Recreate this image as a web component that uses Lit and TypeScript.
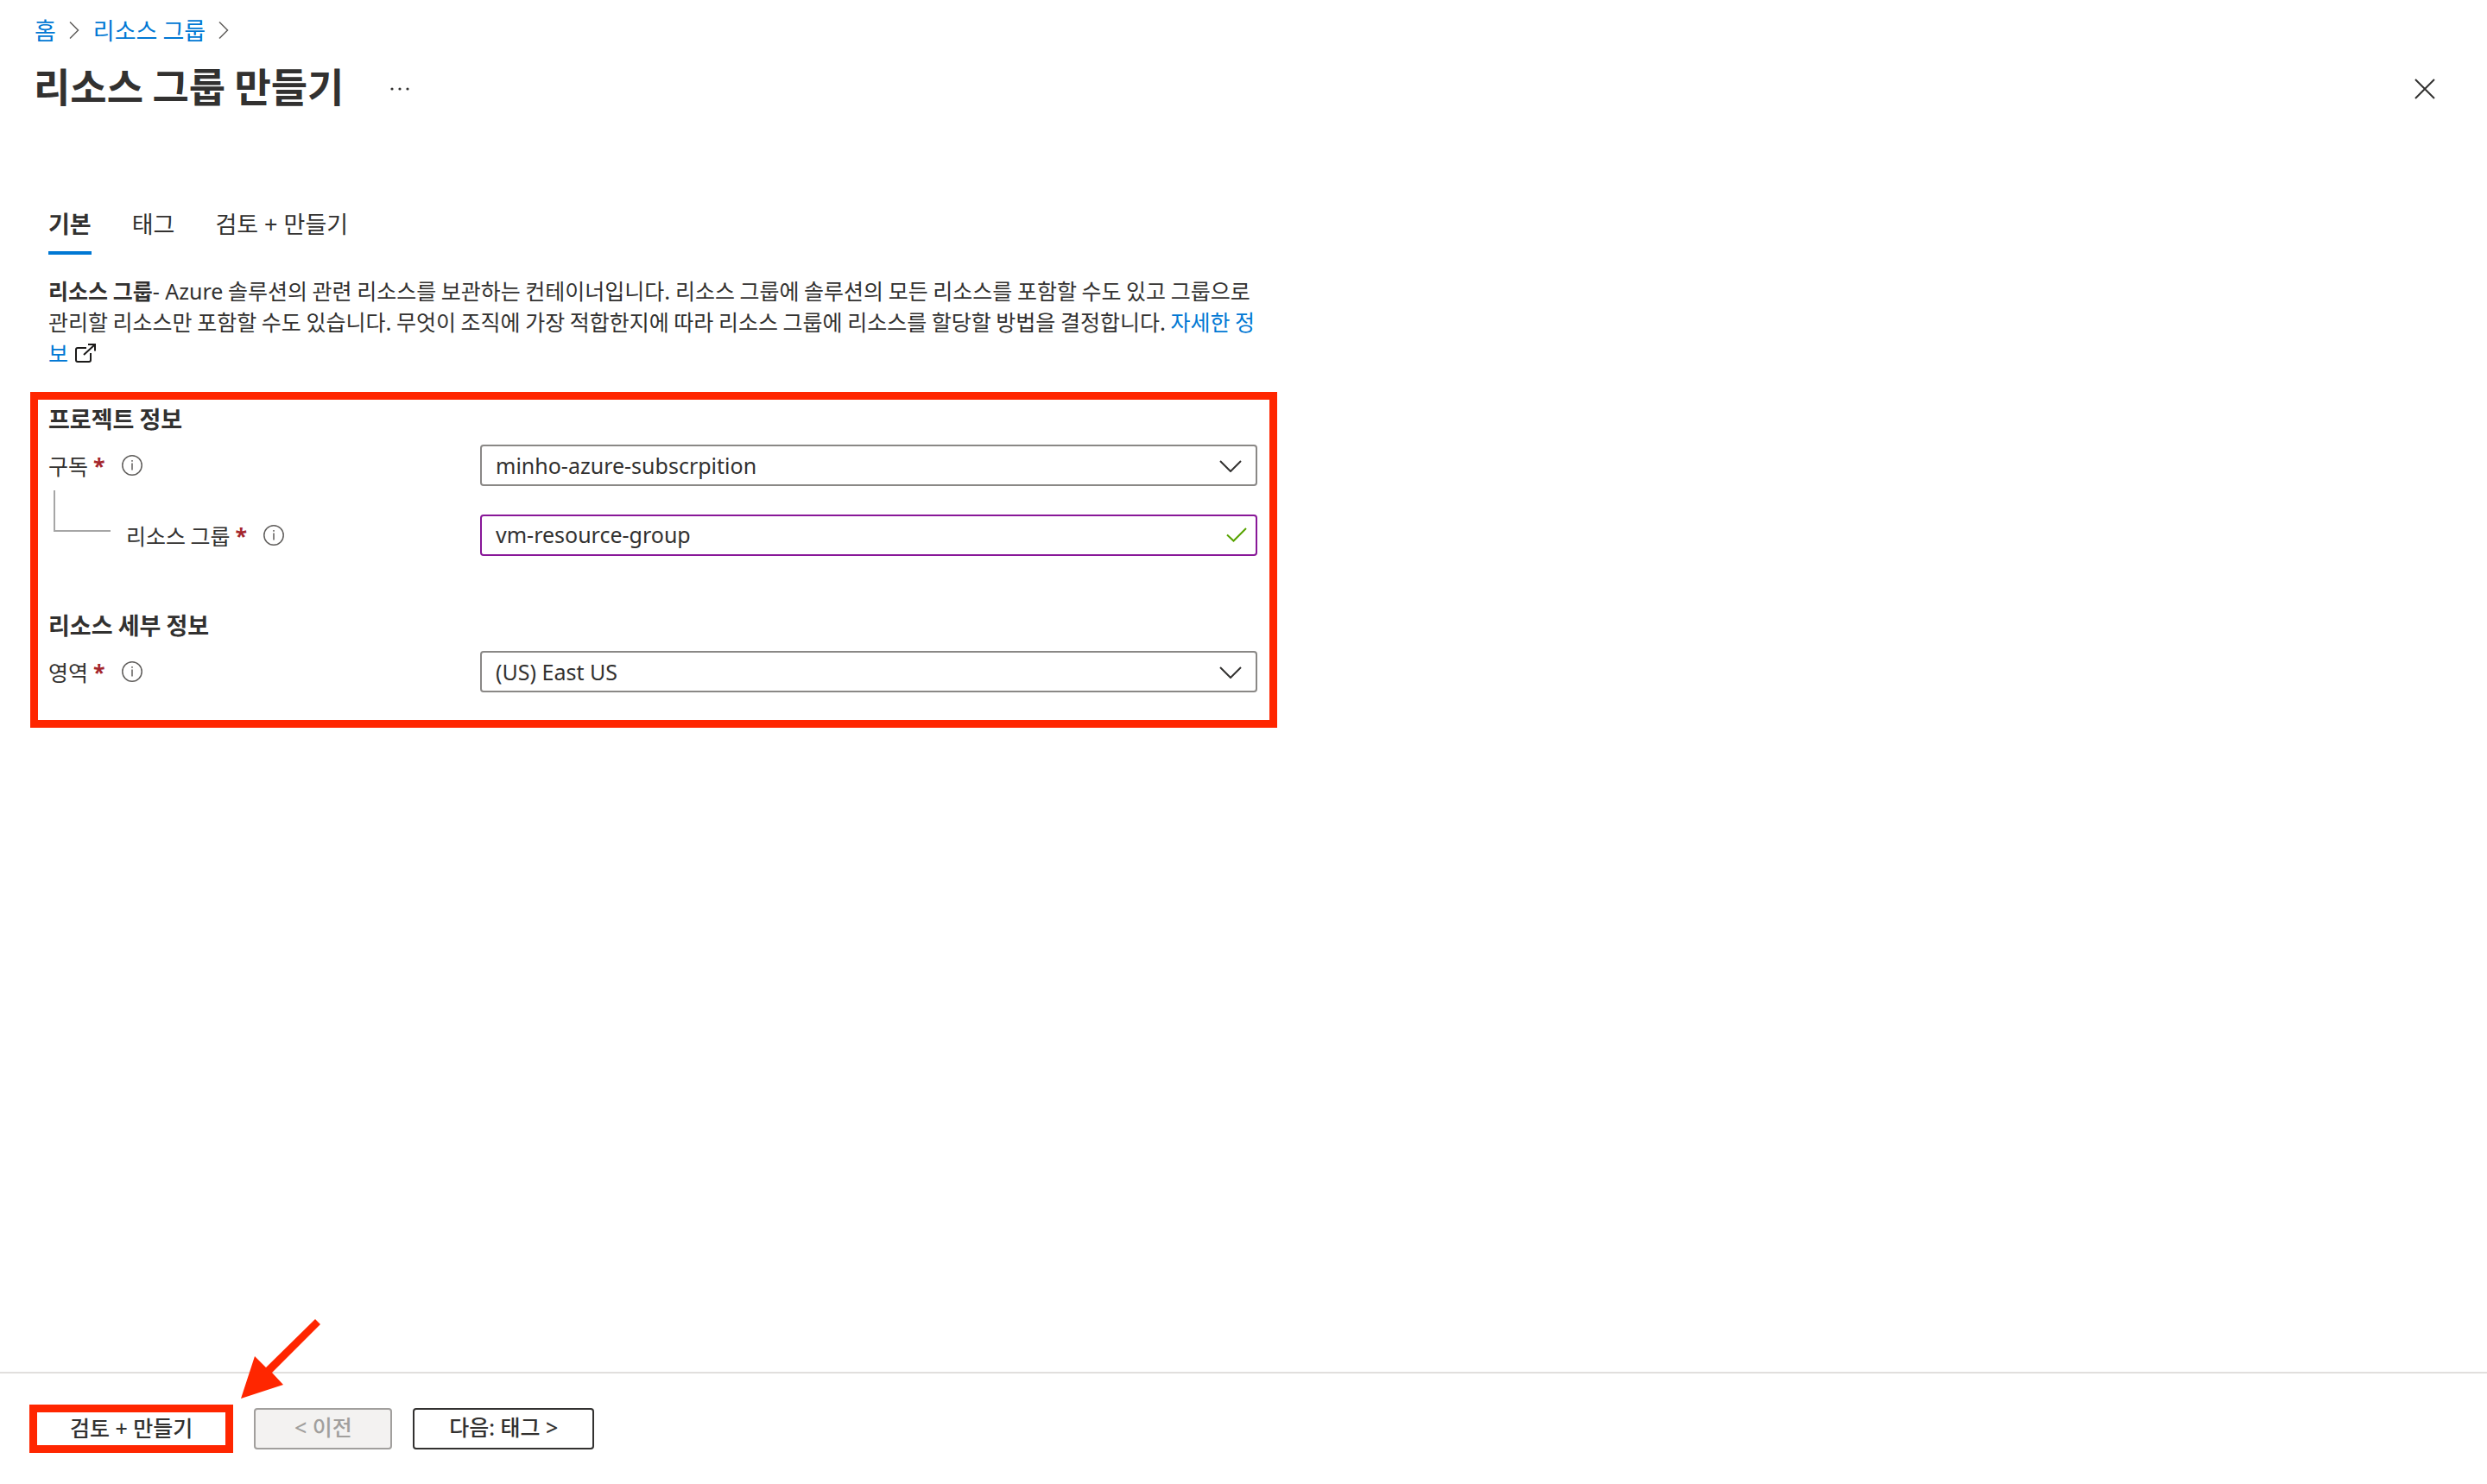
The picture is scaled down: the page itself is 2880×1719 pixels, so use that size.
import { LitElement, html, css, svg } from "lit";
import { customElement, state } from "lit/decorators.js";

const crumbChevron = html`<svg class="crumb-chevron" viewBox="0 0 12 20" aria-hidden="true">
  <path d="M1 0.5 L10.5 10 L1 19.5" />
</svg>`;

const infoIcon = html`<svg class="info" viewBox="0 0 24 24" role="img" aria-label="info">
  <circle cx="12" cy="12" r="11.2" />
  <path d="M12 9.5 V17.5 M12 6 V7.8" />
</svg>`;

const selectChevron = html`<svg class="select-chevron" viewBox="0 0 26 14" aria-hidden="true">
  <path d="M1 1 L13 13 L25 1" />
</svg>`;

const arrowShape = svg`<polygon points="86,0 92,6 36,62 49,76 0,92 16,43 29,56" />`;

@customElement("app-root")
export class AppRoot extends LitElement {
  static styles = css`
    :host {
      display: block;
      color: #323130;
      background: #fff;
      font-family: "Noto Sans CJK KR", sans-serif;
      font-size: 25px;
      line-height: 36px;
    }
    * {
      box-sizing: border-box;
    }
    button,
    input,
    select {
      font: inherit;
      color: inherit;
      margin: 0;
    }
    svg {
      display: block;
      flex: none;
      fill: none;
      stroke: #323130;
    }
    a {
      color: #0078d4;
      text-decoration: none;
    }
    .latin,
    .star,
    .field,
    .tab,
    .action {
      font-family: "Noto Sans", "Noto Sans CJK KR", sans-serif;
    }
    .latin {
      line-height: 24px;
    }
    .page {
      display: flex;
      flex-direction: column;
      min-height: 100vh;
    }
    .crumbs {
      display: flex;
      align-items: center;
      gap: 15px;
      padding: 17px 40px 0;
      font-size: 27px;
    }
    .crumb-chevron {
      width: 12px;
      height: 20px;
      margin-right: 1px;
      stroke: #605e5c;
      stroke-width: 1.5;
    }
    .title-bar {
      display: flex;
      align-items: center;
      padding: 15px 56px 0 39px;
    }
    h1 {
      margin: 0;
      padding-bottom: 8px;
      font-size: 46px;
      line-height: 60px;
      font-weight: 700;
    }
    .icon-button {
      display: flex;
      align-items: center;
      justify-content: center;
      padding: 6px 4px 4px;
      border: 0;
      background: none;
    }
    .more {
      margin-left: 49px;
    }
    .more svg {
      width: 24px;
      height: 24px;
      fill: #323130;
      stroke: none;
    }
    .close {
      margin-left: auto;
    }
    .close svg {
      width: 24px;
      height: 24px;
      stroke-width: 2;
    }
    .tabs {
      display: flex;
      gap: 47px;
      padding: 0 56px;
      margin-top: 104px;
      font-size: 27px;
    }
    .tab {
      height: 55px;
      padding: 2px 0 13px;
      border: 0;
      border-bottom: 4px solid transparent;
      background: none;
    }
    .tab.selected {
      font-weight: 700;
      border-bottom-color: #0078d4;
    }
    .intro {
      max-width: 1464px;
      margin: 23px 0 0;
      padding: 0 0 0 56px;
    }
    .external {
      display: inline-block;
      width: 24px;
      height: 22px;
      margin-left: 2px;
      vertical-align: -1px;
      stroke: #1b1a19;
      stroke-width: 2;
    }
    .panel {
      max-width: 1444px;
      margin: 28px 35px 0;
      padding: 5px 14px 32px 12px;
      border: 9px solid #ff2600;
    }
    h2 {
      margin: 0 0 13px;
      font-size: 27px;
      line-height: 34px;
      font-weight: 700;
    }
    .row {
      display: flex;
      align-items: center;
    }
    .row + .row {
      margin-top: 33px;
    }
    .row + h2 {
      margin-top: 63px;
    }
    .name {
      display: flex;
      align-items: center;
      flex: 0 0 500px;
    }
    .star {
      margin-left: 6px;
      color: #a4262c;
      font-weight: 700;
    }
    .info {
      width: 24px;
      height: 24px;
      margin-left: 19px;
      stroke: #605e5c;
      stroke-width: 1.5;
    }
    .branch {
      align-self: flex-start;
      width: 66px;
      height: 48px;
      margin: -34px 18px 0 6px;
      border: solid #a6a6a6;
      border-width: 0 0 2px 2px;
    }
    .control {
      position: relative;
      flex: 1;
      min-width: 0;
    }
    .field {
      display: block;
      width: 100%;
      height: 48px;
      padding: 0 60px 0 16px;
      border: 2px solid #8a8886;
      border-radius: 4px;
      background: #fff;
      appearance: none;
      outline: none;
    }
    .field.edited {
      padding-bottom: 2px;
      border-color: #881798;
    }
    .select-chevron,
    .check {
      position: absolute;
      pointer-events: none;
      stroke-width: 2;
    }
    .select-chevron {
      top: 18px;
      right: 18px;
      width: 26px;
      height: 14px;
    }
    .check {
      top: 15px;
      right: 12px;
      width: 24px;
      height: 17px;
      stroke: #57a300;
    }
    .footer {
      position: relative;
      display: flex;
      align-items: center;
      gap: 24px;
      margin-top: auto;
      padding: 36px 34px;
      border-top: 2px solid #e1dfdd;
    }
    .action {
      min-width: 160px;
      height: 48px;
      padding: 0 40px 4px;
      border: 2px solid #323130;
      border-radius: 4px;
      background: #fff;
      line-height: 36px;
      font-weight: 500;
    }
    .action:disabled {
      color: #a19f9d;
      border-color: #a19f9d;
      background: #f3f2f1;
    }
    .action.marked {
      height: 56px;
      padding: 0 38px 4px;
      border: 9px solid #ff2600;
      border-radius: 0;
    }
    .arrow {
      position: absolute;
      left: 279px;
      top: -63px;
      width: 93px;
      height: 93px;
      fill: #ff2600;
      stroke: none;
    }
  `;

  @state() private tab = 0;
  @state() private group = "vm-resource-group";

  private tabs = ["기본", "태그", "검토 + 만들기"];

  private label(id: string, text: string, nested = false) {
    return html`<div class="name">
      ${nested ? html`<span class="branch"></span>` : ""}
      <label for=${id}>${text}</label><span class="star">*</span>${infoIcon}
    </div>`;
  }

  private select(id: string, value: string) {
    return html`<div class="control">
      <select class="field" id=${id}>
        <option>${value}</option>
      </select>
      ${selectChevron}
    </div>`;
  }

  render() {
    return html`<div class="page">
      <nav class="crumbs">
        <a href="#">홈</a>${crumbChevron}<a href="#">리소스 그룹</a>${crumbChevron}
      </nav>
      <header class="title-bar">
        <h1>리소스 그룹 만들기</h1>
        <button class="icon-button more" aria-label="more">
          <svg viewBox="0 0 24 24">
            <circle cx="3" cy="12" r="1.6" /><circle cx="12" cy="12" r="1.6" /><circle cx="21" cy="12" r="1.6" />
          </svg>
        </button>
        <button class="icon-button close" aria-label="close">
          <svg viewBox="0 0 24 24"><path d="M1 1 L23 23 M23 1 L1 23" /></svg>
        </button>
      </header>
      <div class="tabs" role="tablist">
        ${this.tabs.map(
          (name, i) => html`<button
            class="tab ${i === this.tab ? "selected" : ""}"
            role="tab"
            aria-selected=${i === this.tab}
            @click=${() => (this.tab = i)}
          >${name}</button>`
        )}
      </div>
      <p class="intro">
        <b>리소스 그룹</b><span class="latin">- Azure</span> 솔루션의 관련 리소스를 보관하는 컨테이너입니다. 리소스 그룹에 솔루션의 모든 리소스를 포함할 수도 있고 그룹으로 관리할 리소스만 포함할 수도 있습니다. 무엇이 조직에 가장 적합한지에 따라 리소스 그룹에 리소스를 할당할 방법을 결정합니다. <a href="#">자세한 정보</a>
        <svg class="external" viewBox="0 0 24 22" aria-hidden="true">
          <path d="M13 5 H3 Q1 5 1 7 V19 Q1 21 3 21 H16 Q18 21 18 19 V11 M10 13 L22.5 1.5 M15 1 H23 V8.5" />
        </svg>
      </p>
      <section class="panel">
        <h2>프로젝트 정보</h2>
        <div class="row">${this.label("subscription", "구독")}${this.select("subscription", "minho-azure-subscrpition")}</div>
        <div class="row">
          ${this.label("group", "리소스 그룹", true)}
          <div class="control">
            <input
              class="field edited"
              id="group"
              type="text"
              .value=${this.group}
              @input=${(e: Event) => (this.group = (e.target as HTMLInputElement).value)}
            />
            <svg class="check" viewBox="0 0 24 17" aria-hidden="true"><path d="M1 8.5 L8.5 15.5 L23 1" /></svg>
          </div>
        </div>
        <h2>리소스 세부 정보</h2>
        <div class="row">${this.label("region", "영역")}${this.select("region", "(US) East US")}</div>
      </section>
      <footer class="footer">
        <button class="action marked">검토 + 만들기</button>
        <button class="action" disabled>&lt; 이전</button>
        <button class="action">다음: 태그 &gt;</button>
        <svg class="arrow" viewBox="0 0 93 93" aria-hidden="true">${arrowShape}</svg>
      </footer>
    </div>`;
  }
}
